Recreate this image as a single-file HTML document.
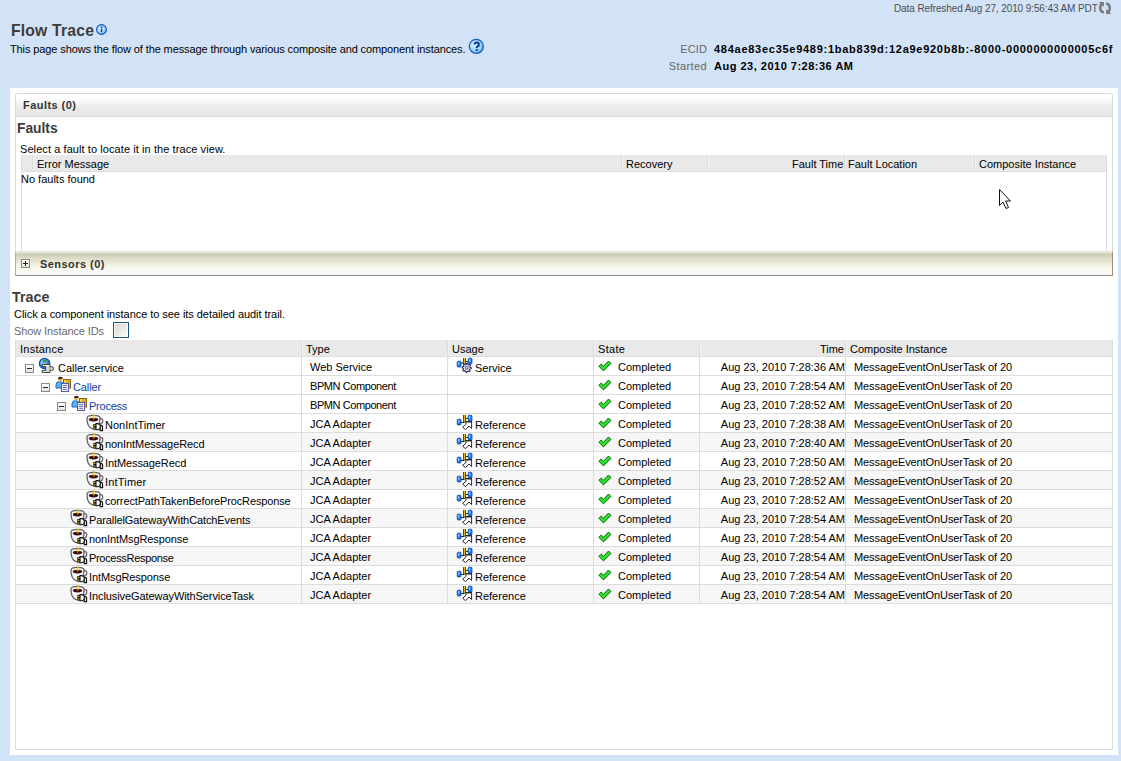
<!DOCTYPE html><html><head><meta charset="utf-8"><title>Flow Trace</title><style>
*{box-sizing:border-box}
html,body{margin:0;padding:0}
body{width:1121px;height:761px;overflow:hidden;background:#d3e3f7;font-family:"Liberation Sans",sans-serif;font-size:11px;color:#000;position:relative}
.a{position:absolute;white-space:nowrap}
.t11{font-size:11px;line-height:13px}
.b{font-weight:bold}
svg{display:block}
#panel{position:absolute;left:10px;top:88px;width:1108px;height:667px;background:#fff}
#fbox{position:absolute;left:15px;top:93px;width:1098px;height:183px;border:1px solid #dadada;border-bottom:none;border-top-left-radius:3px;border-top-right-radius:3px}
#fhead{position:absolute;left:16px;top:94px;width:1096px;height:23px;background:linear-gradient(#fff 0,#fdfdfd 5px,#f4f4f4 9px,#e9eae9 14px,#e7e8e7 100%);border-bottom:1px solid #d9d9d9;border-top-left-radius:2px;border-top-right-radius:2px}
#ftab{position:absolute;left:21px;top:155px;width:1086px;height:97px;border-left:1px solid #dcdcdc;border-right:1px solid #dcdcdc}
.th{position:absolute;top:0;height:17px;background:#e9e9e9;border-bottom:1px solid #dedede}
.hs{position:absolute;top:0;width:1px;height:16px;background:#dcdcdc}
.hs:after{content:"";position:absolute;left:1px;top:0;width:1px;height:16px;background:#f2f2f2}
#sens{position:absolute;left:15px;top:251px;width:1098px;height:25px;border-top:1px solid #e6e6de;border-left:1px solid #b0b0a8;border-right:1px solid #94948c;border-bottom:1px solid #8a8a82;background:linear-gradient(#efeee2 0px,#cbcab2 2px,#dcdbc6 6px,#efeedf 12px,#f8f8f0 17px,#f6f6f4 21px)}
#ttab{position:absolute;left:15px;top:340px;width:1098px;height:410px;border-left:1px solid #dcdcdc;border-right:1px solid #dcdcdc;border-bottom:1px solid #dcdcdc}
.row{position:absolute;left:1px;width:1096px;height:19px;border-bottom:1px solid #dcdcdc}
.cell{position:absolute;top:0;height:18px;white-space:nowrap;font-size:11px;line-height:13px}
.vl{position:absolute;width:1px;background:#dcdcdc}
.lnk{color:#0e3ca8}
</style></head><body>
<svg width="0" height="0" style="position:absolute"><defs>
<linearGradient id="gbox" x1="0" y1="0" x2="0" y2="1"><stop offset="0" stop-color="#fff"/><stop offset="1" stop-color="#e2e2d8"/></linearGradient>
<radialGradient id="globe" cx="0.35" cy="0.35" r="0.7"><stop offset="0" stop-color="#bfe6ff"/><stop offset="0.6" stop-color="#3a8ee0"/><stop offset="1" stop-color="#1a5ab0"/></radialGradient>
<radialGradient id="ibl" cx="0.4" cy="0.4" r="0.65"><stop offset="0" stop-color="#e6f6ff"/><stop offset="0.7" stop-color="#96d0fa"/><stop offset="1" stop-color="#4a9ae8"/></radialGradient>
</defs></svg>
<div class="a" style="left:894px;top:3px;font-size:10px;line-height:12px;color:#4d4d4d;letter-spacing:-0.1px">Data Refreshed Aug 27, 2010 9:56:43 AM PDT</div>
<div class="a" style="left:1097px;top:0px"><svg width="16" height="16" viewBox="0 0 16 16">
<path d="M5.8 3.2 Q3.2 4.2 3.2 8 Q3.2 11.6 6.8 12.6" fill="none" stroke="#787878" stroke-width="2.4"/>
<path d="M1.8 1.9 L6.9 1.9 L6.9 6.9 Z" fill="#787878"/>
<path d="M10.2 12.8 Q12.8 11.8 12.8 8 Q12.8 4.4 9.2 3.4" fill="none" stroke="#787878" stroke-width="2.4"/>
<path d="M14.3 13.9 L9.1 13.9 L9.1 9 Z" fill="#787878"/>
</svg></div>
<div class="a b" style="left:11px;top:22px;font-size:15.7px;line-height:18px;color:#3e3c3a;letter-spacing:0.2px">Flow Trace</div>
<div class="a" style="left:96px;top:24px"><svg width="11" height="11" viewBox="0 0 11 11"><circle cx="5.5" cy="5.5" r="4.9" fill="url(#ibl)" stroke="#0b55c0" stroke-width="1.1"/><circle cx="5.5" cy="3.2" r="0.85" fill="#0a3a9a"/><rect x="4.8" y="4.6" width="1.4" height="3.6" fill="#0a3a9a"/></svg></div>
<div class="a t11" style="left:10px;top:43px;letter-spacing:-0.11px">This page shows the flow of the message through various composite and component instances.</div>
<div class="a" style="left:468px;top:38px"><svg width="17" height="17" viewBox="0 0 17 17"><circle cx="8.3" cy="8.3" r="7" fill="url(#ibl)" stroke="#1a5ac8" stroke-width="1.3"/><path d="M8.6 15.6 a7.3 7.3 0 0 0 7 -5" stroke="#5a7aa0" stroke-width="1" fill="none" opacity="0.5"/>
<path d="M6.6 6.6 Q6.6 4.6 8.7 4.6 Q10.9 4.6 10.9 6.5 Q10.9 7.8 9.6 8.4 Q8.7 8.8 8.7 10.1" fill="none" stroke="#0a3a9a" stroke-width="2"/><rect x="7.7" y="11" width="2" height="1.8" fill="#0a3a9a"/></svg></div>
<div class="a t11" style="left:607px;width:100px;text-align:right;top:43px;color:#666;letter-spacing:0.1px">ECID</div>
<div class="a t11 b" style="left:714px;top:43px;letter-spacing:0.73px">484ae83ec35e9489:1bab839d:12a9e920b8b:-8000-0000000000005c6f</div>
<div class="a t11" style="left:607px;width:100px;text-align:right;top:60px;color:#666;letter-spacing:0.4px">Started</div>
<div class="a t11 b" style="left:714px;top:60px;letter-spacing:0.5px">Aug 23, 2010 7:28:36 AM</div>
<div id="panel"></div><div id="fbox"></div><div id="fhead"></div>
<div class="a t11 b" style="left:23px;top:99px;color:#333;letter-spacing:0.45px">Faults (0)</div>
<div class="a b" style="left:17px;top:121px;font-size:13.8px;line-height:15px;color:#3e3c3a">Faults</div>
<div class="a t11" style="left:20px;top:143px;letter-spacing:0.08px">Select a fault to locate it in the trace view.</div>
<div id="ftab"><div class="th" style="left:0;width:1084px"></div>
<div class="hs" style="left:10px"></div>
<div class="hs" style="left:599px"></div>
<div class="hs" style="left:685px"></div>
<div class="hs" style="left:822px"></div>
<div class="hs" style="left:952px"></div>
</div>
<div class="a t11" style="left:37px;top:158px">Error Message</div>
<div class="a t11" style="left:626px;top:158px">Recovery</div>
<div class="a t11" style="left:792px;top:158px;width:50px;text-align:right">Fault Time</div>
<div class="a t11" style="left:848px;top:158px">Fault Location</div>
<div class="a t11" style="left:979px;top:158px">Composite Instance</div>
<div class="a t11" style="left:21px;top:173px">No faults found</div>
<div class="a" style="left:998px;top:188px"><svg width="14" height="22" viewBox="0 0 14 22"><path d="M1.5 1.5 L1.5 17.5 L5 14 L8 20.5 L10.5 19.5 L7.6 13 L12.5 13 Z" fill="#fff" stroke="#111" stroke-width="1"/></svg></div>
<div id="sens"></div>
<div class="a" style="left:21px;top:259px"><svg width="9" height="9" viewBox="0 0 9 9"><rect x="0.5" y="0.5" width="8" height="8" fill="url(#gbox)" stroke="#8c8c84"/><rect x="2" y="4" width="5" height="1" fill="#222"/><rect x="4" y="2" width="1" height="5" fill="#222"/></svg></div>
<div class="a t11 b" style="left:40px;top:258px;color:#333;letter-spacing:0.45px">Sensors (0)</div>
<div class="a b" style="left:12px;top:290px;font-size:14.3px;line-height:15px;color:#3e3c3a">Trace</div>
<div class="a t11" style="left:14px;top:308px;letter-spacing:-0.05px">Click a component instance to see its detailed audit trail.</div>
<div class="a t11" style="left:14px;top:325px;color:#6a6a6a;letter-spacing:-0.1px">Show Instance IDs</div>
<div class="a" style="left:113px;top:322px;width:16px;height:16px;border:1px solid #1d5488;box-shadow:inset 0 0 0 1px #fdfcf8;background:linear-gradient(135deg,#d6d7d2,#fbfbf8)"></div>
<div id="ttab"></div>
<div class="a" style="left:16px;top:340px;width:1096px;height:17px;background:#e9e9e9;border-bottom:1px solid #dedede"></div>
<div class="a" style="left:301px;top:340px;width:1px;height:16px;background:#dcdcdc"></div><div class="a" style="left:302px;top:340px;width:1px;height:16px;background:#f2f2f2"></div>
<div class="a" style="left:447px;top:340px;width:1px;height:16px;background:#dcdcdc"></div><div class="a" style="left:448px;top:340px;width:1px;height:16px;background:#f2f2f2"></div>
<div class="a" style="left:593px;top:340px;width:1px;height:16px;background:#dcdcdc"></div><div class="a" style="left:594px;top:340px;width:1px;height:16px;background:#f2f2f2"></div>
<div class="a" style="left:699px;top:340px;width:1px;height:16px;background:#dcdcdc"></div><div class="a" style="left:700px;top:340px;width:1px;height:16px;background:#f2f2f2"></div>
<div class="a" style="left:845px;top:340px;width:1px;height:16px;background:#dcdcdc"></div><div class="a" style="left:846px;top:340px;width:1px;height:16px;background:#f2f2f2"></div>
<div class="a t11" style="left:20px;top:343px;letter-spacing:0.25px">Instance</div>
<div class="a t11" style="left:306px;top:343px">Type</div>
<div class="a t11" style="left:452px;top:343px">Usage</div>
<div class="a t11" style="left:598px;top:343px;letter-spacing:0.3px">State</div>
<div class="a t11" style="left:780px;top:343px;width:64px;text-align:right">Time</div>
<div class="a t11" style="left:850px;top:343px">Composite Instance</div>
<div class="a" style="left:16px;top:357px;width:1096px;height:19px;background:#fff;border-bottom:1px solid #dcdcdc"></div>
<div class="a" style="left:301px;top:357px;width:1px;height:18px;background:#dcdcdc"></div>
<div class="a" style="left:447px;top:357px;width:1px;height:18px;background:#dcdcdc"></div>
<div class="a" style="left:593px;top:357px;width:1px;height:18px;background:#dcdcdc"></div>
<div class="a" style="left:699px;top:357px;width:1px;height:18px;background:#dcdcdc"></div>
<div class="a" style="left:845px;top:357px;width:1px;height:18px;background:#dcdcdc"></div>
<div class="a" style="left:25px;top:364px"><svg width="9" height="9" viewBox="0 0 9 9"><rect x="0.5" y="0.5" width="8" height="8" fill="url(#gbox)" stroke="#8c8c84"/><rect x="2" y="4" width="5" height="1" fill="#222"/></svg></div>
<div class="a" style="left:36px;top:356px"><svg width="20" height="20" viewBox="0 0 20 20">
<circle cx="8.6" cy="7.5" r="5.2" fill="url(#globe)" stroke="#0a48a8" stroke-width="1.2"/>
<path d="M6.5 4 Q8.5 3 10.5 4.2 Q11 5.5 9.5 6.2 Q8 6 7.2 7 Q6 6 6.5 4Z" fill="#2a9a2a" opacity="0.85"/>
<path d="M11.8 6.5 Q13.3 7 13.2 9 L12 10 Q11.5 8 11.8 6.5Z" fill="#2a9a2a" opacity="0.85"/>
<circle cx="15.6" cy="12.6" r="2" fill="#cfcfcf" stroke="#474747" stroke-width="1"/><path d="M6.5 8.5 H14 V16.5 H6 V14.5 H9.5 V10.5 H6.5 Z" fill="#d4d4d4" stroke="#474747" stroke-width="1"/><rect x="13.4" y="11.3" width="1.3" height="2.6" fill="#d0d0d0"/>
<path d="M7.3 9.5 H13 M7 15.5 H9" stroke="#fff" stroke-width="0.8"/>
</svg></div>
<div class="a t11 " style="left:58px;top:362px;letter-spacing:-0.008px">Caller.service</div>
<div class="a t11" style="left:310px;top:361px;letter-spacing:0px">Web Service</div>
<div class="a" style="left:454px;top:357px"><svg width="20" height="18" viewBox="0 0 20 18">
<path d="M7 6 H9.5 M12 4.5 H14" stroke="#222" stroke-width="1"/>
<rect x="9.2" y="1" width="2.6" height="6" fill="#222"/><rect x="10.1" y="1" width="0.9" height="6" fill="#f6d21e"/>
<rect x="3.2" y="4.2" width="3.8" height="5.8" rx="1" fill="#1f78e8" stroke="#0848b8" stroke-width="0.8"/>
<rect x="4.3" y="5.2" width="1" height="2.5" fill="#cfe4ff"/>
<rect x="14.2" y="1.2" width="3.8" height="5.8" rx="1" fill="#1f78e8" stroke="#0848b8" stroke-width="0.8"/>
<rect x="15.3" y="2.2" width="1" height="2.5" fill="#cfe4ff"/>
<path d="M12.70 6.20 L13.60 6.29 L14.00 7.66 L14.59 7.97 L15.95 7.55 L16.52 8.24 L15.84 9.50 L16.03 10.14 L17.30 10.80 L17.21 11.70 L15.84 12.10 L15.53 12.69 L15.95 14.05 L15.26 14.62 L14.00 13.94 L13.36 14.13 L12.70 15.40 L11.80 15.31 L11.40 13.94 L10.81 13.63 L9.45 14.05 L8.88 13.36 L9.56 12.10 L9.37 11.46 L8.10 10.80 L8.19 9.90 L9.56 9.50 L9.87 8.91 L9.45 7.55 L10.14 6.98 L11.40 7.66 L12.04 7.47Z" fill="#ececf8" stroke="#2e2e66" stroke-width="1.1" stroke-linejoin="round"/>
<circle cx="12.7" cy="10.8" r="1.4" fill="#fff" stroke="#33336e" stroke-width="1"/>
</svg></div>
<div class="a t11" style="left:475px;top:362px">Service</div>
<div class="a" style="left:594px;top:356px"><svg width="20" height="18" viewBox="0 0 20 18">
<path d="M4.9 10.3 L7.2 8 L9.5 10.3 L14.5 5 L16.9 7.4 L9.5 14.9 Z" fill="#1edc1e" stroke="#0a6a0a" stroke-width="1"/>
<path d="M6.5 10 L9.5 12.8 M10.8 10.8 L15 6.6" stroke="#b4ffb4" stroke-width="0.7" stroke-dasharray="0.9 0.9"/>
</svg></div>
<div class="a t11" style="left:618px;top:361px">Completed</div>
<div class="a t11" style="left:701px;top:361px;width:144px;text-align:right">Aug 23, 2010 7:28:36 AM</div>
<div class="a t11" style="left:854px;top:361px;letter-spacing:-0.1px">MessageEventOnUserTask of 20</div>
<div class="a" style="left:16px;top:376px;width:1096px;height:19px;background:#fff;border-bottom:1px solid #dcdcdc"></div>
<div class="a" style="left:301px;top:376px;width:1px;height:18px;background:#dcdcdc"></div>
<div class="a" style="left:447px;top:376px;width:1px;height:18px;background:#dcdcdc"></div>
<div class="a" style="left:593px;top:376px;width:1px;height:18px;background:#dcdcdc"></div>
<div class="a" style="left:699px;top:376px;width:1px;height:18px;background:#dcdcdc"></div>
<div class="a" style="left:845px;top:376px;width:1px;height:18px;background:#dcdcdc"></div>
<div class="a" style="left:41px;top:383px"><svg width="9" height="9" viewBox="0 0 9 9"><rect x="0.5" y="0.5" width="8" height="8" fill="url(#gbox)" stroke="#8c8c84"/><rect x="2" y="4" width="5" height="1" fill="#222"/></svg></div>
<div class="a" style="left:52px;top:375px"><svg width="20" height="20" viewBox="0 0 20 20">
<rect x="11.5" y="4.5" width="7" height="8.5" fill="#dcae22" stroke="#8a6408" stroke-width="1"/>
<rect x="12.5" y="5" width="1.2" height="7.5" fill="#fbe890"/>
<path d="M4 13 V9.8 Q4 6.6 7.5 6.6 Q11.2 6.6 11.2 9.8 V13 Z" fill="#5cb2f2" stroke="#1a64c8" stroke-width="1"/>
<circle cx="8.3" cy="4.8" r="1.9" fill="#f2b01a"/>
<path d="M6 4.2 Q6 1.8 8.4 1.8 Q10.8 1.8 10.8 4 Q9 3.2 6 4.2Z" fill="#3a1408"/>
<rect x="9.5" y="8.5" width="7" height="8" fill="#f6f6ff" stroke="#5c5c9c" stroke-width="1.1"/>
<path d="M11 10.6 H15 M11 12.5 H15 M11 14.4 H15" stroke="#6c6cb4" stroke-width="1"/>
</svg></div>
<div class="a t11 lnk" style="left:73px;top:381px;letter-spacing:-0.120px">Caller</div>
<div class="a t11" style="left:310px;top:380px;letter-spacing:-0.42px">BPMN Component</div>
<div class="a" style="left:594px;top:375px"><svg width="20" height="18" viewBox="0 0 20 18">
<path d="M4.9 10.3 L7.2 8 L9.5 10.3 L14.5 5 L16.9 7.4 L9.5 14.9 Z" fill="#1edc1e" stroke="#0a6a0a" stroke-width="1"/>
<path d="M6.5 10 L9.5 12.8 M10.8 10.8 L15 6.6" stroke="#b4ffb4" stroke-width="0.7" stroke-dasharray="0.9 0.9"/>
</svg></div>
<div class="a t11" style="left:618px;top:380px">Completed</div>
<div class="a t11" style="left:701px;top:380px;width:144px;text-align:right">Aug 23, 2010 7:28:54 AM</div>
<div class="a t11" style="left:854px;top:380px;letter-spacing:-0.1px">MessageEventOnUserTask of 20</div>
<div class="a" style="left:16px;top:395px;width:1096px;height:19px;background:#fff;border-bottom:1px solid #dcdcdc"></div>
<div class="a" style="left:301px;top:395px;width:1px;height:18px;background:#dcdcdc"></div>
<div class="a" style="left:447px;top:395px;width:1px;height:18px;background:#dcdcdc"></div>
<div class="a" style="left:593px;top:395px;width:1px;height:18px;background:#dcdcdc"></div>
<div class="a" style="left:699px;top:395px;width:1px;height:18px;background:#dcdcdc"></div>
<div class="a" style="left:845px;top:395px;width:1px;height:18px;background:#dcdcdc"></div>
<div class="a" style="left:57px;top:402px"><svg width="9" height="9" viewBox="0 0 9 9"><rect x="0.5" y="0.5" width="8" height="8" fill="url(#gbox)" stroke="#8c8c84"/><rect x="2" y="4" width="5" height="1" fill="#222"/></svg></div>
<div class="a" style="left:68px;top:394px"><svg width="20" height="20" viewBox="0 0 20 20">
<rect x="11.5" y="4.5" width="7" height="8.5" fill="#dcae22" stroke="#8a6408" stroke-width="1"/>
<rect x="12.5" y="5" width="1.2" height="7.5" fill="#fbe890"/>
<path d="M4 13 V9.8 Q4 6.6 7.5 6.6 Q11.2 6.6 11.2 9.8 V13 Z" fill="#5cb2f2" stroke="#1a64c8" stroke-width="1"/>
<circle cx="8.3" cy="4.8" r="1.9" fill="#f2b01a"/>
<path d="M6 4.2 Q6 1.8 8.4 1.8 Q10.8 1.8 10.8 4 Q9 3.2 6 4.2Z" fill="#3a1408"/>
<rect x="9.5" y="8.5" width="7" height="8" fill="#f6f6ff" stroke="#5c5c9c" stroke-width="1.1"/>
<path d="M11 10.6 H15 M11 12.5 H15 M11 14.4 H15" stroke="#6c6cb4" stroke-width="1"/>
</svg></div>
<div class="a t11 lnk" style="left:89px;top:400px;letter-spacing:-0.233px">Process</div>
<div class="a t11" style="left:310px;top:399px;letter-spacing:-0.42px">BPMN Component</div>
<div class="a" style="left:594px;top:394px"><svg width="20" height="18" viewBox="0 0 20 18">
<path d="M4.9 10.3 L7.2 8 L9.5 10.3 L14.5 5 L16.9 7.4 L9.5 14.9 Z" fill="#1edc1e" stroke="#0a6a0a" stroke-width="1"/>
<path d="M6.5 10 L9.5 12.8 M10.8 10.8 L15 6.6" stroke="#b4ffb4" stroke-width="0.7" stroke-dasharray="0.9 0.9"/>
</svg></div>
<div class="a t11" style="left:618px;top:399px">Completed</div>
<div class="a t11" style="left:701px;top:399px;width:144px;text-align:right">Aug 23, 2010 7:28:52 AM</div>
<div class="a t11" style="left:854px;top:399px;letter-spacing:-0.1px">MessageEventOnUserTask of 20</div>
<div class="a" style="left:16px;top:414px;width:1096px;height:19px;background:#fff;border-bottom:1px solid #dcdcdc"></div>
<div class="a" style="left:301px;top:414px;width:1px;height:18px;background:#dcdcdc"></div>
<div class="a" style="left:447px;top:414px;width:1px;height:18px;background:#dcdcdc"></div>
<div class="a" style="left:593px;top:414px;width:1px;height:18px;background:#dcdcdc"></div>
<div class="a" style="left:699px;top:414px;width:1px;height:18px;background:#dcdcdc"></div>
<div class="a" style="left:845px;top:414px;width:1px;height:18px;background:#dcdcdc"></div>
<div class="a" style="left:85px;top:413px"><svg width="20" height="20" viewBox="0 0 20 20">
<path d="M14.3 5.6 Q18.2 5 17.7 8.6 Q17.2 11.4 14 11.2" fill="none" stroke="#6a6a6a" stroke-width="1.3"/>
<path d="M2 5 Q2 2.4 8.5 2.4 Q15 2.4 15 5 Q15 12 12 14.5 Q10.5 15.8 8.5 15.8 Q6.5 15.8 5 14.5 Q2 12 2 5 Z" fill="#f4f4f8" stroke="#626262" stroke-width="1.3"/>
<ellipse cx="8.5" cy="6.6" rx="4.7" ry="1.8" fill="#3c0604"/>
<path d="M9 1.6 L7 5.2 L8.8 5.2 L8 7.8 L10.6 4.2 L8.9 4.2 L10.2 1.6 Z" fill="#f8cc22"/>
<path d="M15 12.6 H16.4 Q17.6 12.6 17.6 14 V17.6 H15.2 Z" fill="#dcdcdc" stroke="#111" stroke-width="1.1"/>
<rect x="8.3" y="11" width="3" height="5.6" fill="#111"/>
<rect x="8.9" y="11.8" width="1.9" height="1.1" fill="#f4d020"/><rect x="8.9" y="14.5" width="1.9" height="1.1" fill="#f4d020"/>
<path d="M11 10.6 H12.4 Q15.4 10.6 15.4 13.6 Q15.4 16.7 12.4 16.7 H11 Z" fill="#fafafa" stroke="#111" stroke-width="1.1"/>
</svg></div>
<div class="a t11 " style="left:105px;top:419px;letter-spacing:0.010px">NonIntTimer</div>
<div class="a t11" style="left:310px;top:418px;letter-spacing:0px">JCA Adapter</div>
<div class="a" style="left:454px;top:414px"><svg width="20" height="18" viewBox="0 0 20 18">
<path d="M7 8.5 H10 M12 4.5 H14 M11 7.5 H18" stroke="#222" stroke-width="1"/>
<rect x="9.2" y="1" width="2.6" height="7" fill="#222"/><rect x="10.1" y="1" width="0.9" height="7" fill="#f6d21e"/>
<rect x="3.2" y="5.2" width="3.8" height="5.8" rx="1" fill="#1f78e8" stroke="#0848b8" stroke-width="0.8"/>
<rect x="4.3" y="6.2" width="1" height="2.5" fill="#cfe4ff"/>
<rect x="14.2" y="1.2" width="3.8" height="5.8" rx="1" fill="#1f78e8" stroke="#0848b8" stroke-width="0.8"/>
<rect x="15.3" y="2.2" width="1" height="2.5" fill="#cfe4ff"/>
<path d="M11 8 H17.6 V14.5 L15 12 L11.6 15.6 L8.6 13.3 L12.4 10 L10.6 8.2 Z" fill="#fff" stroke="#2a2a2a" stroke-width="1"/>
</svg></div>
<div class="a t11" style="left:475px;top:419px">Reference</div>
<div class="a" style="left:594px;top:413px"><svg width="20" height="18" viewBox="0 0 20 18">
<path d="M4.9 10.3 L7.2 8 L9.5 10.3 L14.5 5 L16.9 7.4 L9.5 14.9 Z" fill="#1edc1e" stroke="#0a6a0a" stroke-width="1"/>
<path d="M6.5 10 L9.5 12.8 M10.8 10.8 L15 6.6" stroke="#b4ffb4" stroke-width="0.7" stroke-dasharray="0.9 0.9"/>
</svg></div>
<div class="a t11" style="left:618px;top:418px">Completed</div>
<div class="a t11" style="left:701px;top:418px;width:144px;text-align:right">Aug 23, 2010 7:28:38 AM</div>
<div class="a t11" style="left:854px;top:418px;letter-spacing:-0.1px">MessageEventOnUserTask of 20</div>
<div class="a" style="left:16px;top:433px;width:1096px;height:19px;background:#f6f6f6;border-bottom:1px solid #dcdcdc"></div>
<div class="a" style="left:301px;top:433px;width:1px;height:18px;background:#dcdcdc"></div>
<div class="a" style="left:447px;top:433px;width:1px;height:18px;background:#dcdcdc"></div>
<div class="a" style="left:593px;top:433px;width:1px;height:18px;background:#dcdcdc"></div>
<div class="a" style="left:699px;top:433px;width:1px;height:18px;background:#dcdcdc"></div>
<div class="a" style="left:845px;top:433px;width:1px;height:18px;background:#dcdcdc"></div>
<div class="a" style="left:85px;top:432px"><svg width="20" height="20" viewBox="0 0 20 20">
<path d="M14.3 5.6 Q18.2 5 17.7 8.6 Q17.2 11.4 14 11.2" fill="none" stroke="#6a6a6a" stroke-width="1.3"/>
<path d="M2 5 Q2 2.4 8.5 2.4 Q15 2.4 15 5 Q15 12 12 14.5 Q10.5 15.8 8.5 15.8 Q6.5 15.8 5 14.5 Q2 12 2 5 Z" fill="#f4f4f8" stroke="#626262" stroke-width="1.3"/>
<ellipse cx="8.5" cy="6.6" rx="4.7" ry="1.8" fill="#3c0604"/>
<path d="M9 1.6 L7 5.2 L8.8 5.2 L8 7.8 L10.6 4.2 L8.9 4.2 L10.2 1.6 Z" fill="#f8cc22"/>
<path d="M15 12.6 H16.4 Q17.6 12.6 17.6 14 V17.6 H15.2 Z" fill="#dcdcdc" stroke="#111" stroke-width="1.1"/>
<rect x="8.3" y="11" width="3" height="5.6" fill="#111"/>
<rect x="8.9" y="11.8" width="1.9" height="1.1" fill="#f4d020"/><rect x="8.9" y="14.5" width="1.9" height="1.1" fill="#f4d020"/>
<path d="M11 10.6 H12.4 Q15.4 10.6 15.4 13.6 Q15.4 16.7 12.4 16.7 H11 Z" fill="#fafafa" stroke="#111" stroke-width="1.1"/>
</svg></div>
<div class="a t11 " style="left:105px;top:438px;letter-spacing:-0.081px">nonIntMessageRecd</div>
<div class="a t11" style="left:310px;top:437px;letter-spacing:0px">JCA Adapter</div>
<div class="a" style="left:454px;top:433px"><svg width="20" height="18" viewBox="0 0 20 18">
<path d="M7 8.5 H10 M12 4.5 H14 M11 7.5 H18" stroke="#222" stroke-width="1"/>
<rect x="9.2" y="1" width="2.6" height="7" fill="#222"/><rect x="10.1" y="1" width="0.9" height="7" fill="#f6d21e"/>
<rect x="3.2" y="5.2" width="3.8" height="5.8" rx="1" fill="#1f78e8" stroke="#0848b8" stroke-width="0.8"/>
<rect x="4.3" y="6.2" width="1" height="2.5" fill="#cfe4ff"/>
<rect x="14.2" y="1.2" width="3.8" height="5.8" rx="1" fill="#1f78e8" stroke="#0848b8" stroke-width="0.8"/>
<rect x="15.3" y="2.2" width="1" height="2.5" fill="#cfe4ff"/>
<path d="M11 8 H17.6 V14.5 L15 12 L11.6 15.6 L8.6 13.3 L12.4 10 L10.6 8.2 Z" fill="#fff" stroke="#2a2a2a" stroke-width="1"/>
</svg></div>
<div class="a t11" style="left:475px;top:438px">Reference</div>
<div class="a" style="left:594px;top:432px"><svg width="20" height="18" viewBox="0 0 20 18">
<path d="M4.9 10.3 L7.2 8 L9.5 10.3 L14.5 5 L16.9 7.4 L9.5 14.9 Z" fill="#1edc1e" stroke="#0a6a0a" stroke-width="1"/>
<path d="M6.5 10 L9.5 12.8 M10.8 10.8 L15 6.6" stroke="#b4ffb4" stroke-width="0.7" stroke-dasharray="0.9 0.9"/>
</svg></div>
<div class="a t11" style="left:618px;top:437px">Completed</div>
<div class="a t11" style="left:701px;top:437px;width:144px;text-align:right">Aug 23, 2010 7:28:40 AM</div>
<div class="a t11" style="left:854px;top:437px;letter-spacing:-0.1px">MessageEventOnUserTask of 20</div>
<div class="a" style="left:16px;top:452px;width:1096px;height:19px;background:#fff;border-bottom:1px solid #dcdcdc"></div>
<div class="a" style="left:301px;top:452px;width:1px;height:18px;background:#dcdcdc"></div>
<div class="a" style="left:447px;top:452px;width:1px;height:18px;background:#dcdcdc"></div>
<div class="a" style="left:593px;top:452px;width:1px;height:18px;background:#dcdcdc"></div>
<div class="a" style="left:699px;top:452px;width:1px;height:18px;background:#dcdcdc"></div>
<div class="a" style="left:845px;top:452px;width:1px;height:18px;background:#dcdcdc"></div>
<div class="a" style="left:85px;top:451px"><svg width="20" height="20" viewBox="0 0 20 20">
<path d="M14.3 5.6 Q18.2 5 17.7 8.6 Q17.2 11.4 14 11.2" fill="none" stroke="#6a6a6a" stroke-width="1.3"/>
<path d="M2 5 Q2 2.4 8.5 2.4 Q15 2.4 15 5 Q15 12 12 14.5 Q10.5 15.8 8.5 15.8 Q6.5 15.8 5 14.5 Q2 12 2 5 Z" fill="#f4f4f8" stroke="#626262" stroke-width="1.3"/>
<ellipse cx="8.5" cy="6.6" rx="4.7" ry="1.8" fill="#3c0604"/>
<path d="M9 1.6 L7 5.2 L8.8 5.2 L8 7.8 L10.6 4.2 L8.9 4.2 L10.2 1.6 Z" fill="#f8cc22"/>
<path d="M15 12.6 H16.4 Q17.6 12.6 17.6 14 V17.6 H15.2 Z" fill="#dcdcdc" stroke="#111" stroke-width="1.1"/>
<rect x="8.3" y="11" width="3" height="5.6" fill="#111"/>
<rect x="8.9" y="11.8" width="1.9" height="1.1" fill="#f4d020"/><rect x="8.9" y="14.5" width="1.9" height="1.1" fill="#f4d020"/>
<path d="M11 10.6 H12.4 Q15.4 10.6 15.4 13.6 Q15.4 16.7 12.4 16.7 H11 Z" fill="#fafafa" stroke="#111" stroke-width="1.1"/>
</svg></div>
<div class="a t11 " style="left:105px;top:457px;letter-spacing:-0.100px">IntMessageRecd</div>
<div class="a t11" style="left:310px;top:456px;letter-spacing:0px">JCA Adapter</div>
<div class="a" style="left:454px;top:452px"><svg width="20" height="18" viewBox="0 0 20 18">
<path d="M7 8.5 H10 M12 4.5 H14 M11 7.5 H18" stroke="#222" stroke-width="1"/>
<rect x="9.2" y="1" width="2.6" height="7" fill="#222"/><rect x="10.1" y="1" width="0.9" height="7" fill="#f6d21e"/>
<rect x="3.2" y="5.2" width="3.8" height="5.8" rx="1" fill="#1f78e8" stroke="#0848b8" stroke-width="0.8"/>
<rect x="4.3" y="6.2" width="1" height="2.5" fill="#cfe4ff"/>
<rect x="14.2" y="1.2" width="3.8" height="5.8" rx="1" fill="#1f78e8" stroke="#0848b8" stroke-width="0.8"/>
<rect x="15.3" y="2.2" width="1" height="2.5" fill="#cfe4ff"/>
<path d="M11 8 H17.6 V14.5 L15 12 L11.6 15.6 L8.6 13.3 L12.4 10 L10.6 8.2 Z" fill="#fff" stroke="#2a2a2a" stroke-width="1"/>
</svg></div>
<div class="a t11" style="left:475px;top:457px">Reference</div>
<div class="a" style="left:594px;top:451px"><svg width="20" height="18" viewBox="0 0 20 18">
<path d="M4.9 10.3 L7.2 8 L9.5 10.3 L14.5 5 L16.9 7.4 L9.5 14.9 Z" fill="#1edc1e" stroke="#0a6a0a" stroke-width="1"/>
<path d="M6.5 10 L9.5 12.8 M10.8 10.8 L15 6.6" stroke="#b4ffb4" stroke-width="0.7" stroke-dasharray="0.9 0.9"/>
</svg></div>
<div class="a t11" style="left:618px;top:456px">Completed</div>
<div class="a t11" style="left:701px;top:456px;width:144px;text-align:right">Aug 23, 2010 7:28:50 AM</div>
<div class="a t11" style="left:854px;top:456px;letter-spacing:-0.1px">MessageEventOnUserTask of 20</div>
<div class="a" style="left:16px;top:471px;width:1096px;height:19px;background:#f6f6f6;border-bottom:1px solid #dcdcdc"></div>
<div class="a" style="left:301px;top:471px;width:1px;height:18px;background:#dcdcdc"></div>
<div class="a" style="left:447px;top:471px;width:1px;height:18px;background:#dcdcdc"></div>
<div class="a" style="left:593px;top:471px;width:1px;height:18px;background:#dcdcdc"></div>
<div class="a" style="left:699px;top:471px;width:1px;height:18px;background:#dcdcdc"></div>
<div class="a" style="left:845px;top:471px;width:1px;height:18px;background:#dcdcdc"></div>
<div class="a" style="left:85px;top:470px"><svg width="20" height="20" viewBox="0 0 20 20">
<path d="M14.3 5.6 Q18.2 5 17.7 8.6 Q17.2 11.4 14 11.2" fill="none" stroke="#6a6a6a" stroke-width="1.3"/>
<path d="M2 5 Q2 2.4 8.5 2.4 Q15 2.4 15 5 Q15 12 12 14.5 Q10.5 15.8 8.5 15.8 Q6.5 15.8 5 14.5 Q2 12 2 5 Z" fill="#f4f4f8" stroke="#626262" stroke-width="1.3"/>
<ellipse cx="8.5" cy="6.6" rx="4.7" ry="1.8" fill="#3c0604"/>
<path d="M9 1.6 L7 5.2 L8.8 5.2 L8 7.8 L10.6 4.2 L8.9 4.2 L10.2 1.6 Z" fill="#f8cc22"/>
<path d="M15 12.6 H16.4 Q17.6 12.6 17.6 14 V17.6 H15.2 Z" fill="#dcdcdc" stroke="#111" stroke-width="1.1"/>
<rect x="8.3" y="11" width="3" height="5.6" fill="#111"/>
<rect x="8.9" y="11.8" width="1.9" height="1.1" fill="#f4d020"/><rect x="8.9" y="14.5" width="1.9" height="1.1" fill="#f4d020"/>
<path d="M11 10.6 H12.4 Q15.4 10.6 15.4 13.6 Q15.4 16.7 12.4 16.7 H11 Z" fill="#fafafa" stroke="#111" stroke-width="1.1"/>
</svg></div>
<div class="a t11 " style="left:105px;top:476px;letter-spacing:0.186px">IntTimer</div>
<div class="a t11" style="left:310px;top:475px;letter-spacing:0px">JCA Adapter</div>
<div class="a" style="left:454px;top:471px"><svg width="20" height="18" viewBox="0 0 20 18">
<path d="M7 8.5 H10 M12 4.5 H14 M11 7.5 H18" stroke="#222" stroke-width="1"/>
<rect x="9.2" y="1" width="2.6" height="7" fill="#222"/><rect x="10.1" y="1" width="0.9" height="7" fill="#f6d21e"/>
<rect x="3.2" y="5.2" width="3.8" height="5.8" rx="1" fill="#1f78e8" stroke="#0848b8" stroke-width="0.8"/>
<rect x="4.3" y="6.2" width="1" height="2.5" fill="#cfe4ff"/>
<rect x="14.2" y="1.2" width="3.8" height="5.8" rx="1" fill="#1f78e8" stroke="#0848b8" stroke-width="0.8"/>
<rect x="15.3" y="2.2" width="1" height="2.5" fill="#cfe4ff"/>
<path d="M11 8 H17.6 V14.5 L15 12 L11.6 15.6 L8.6 13.3 L12.4 10 L10.6 8.2 Z" fill="#fff" stroke="#2a2a2a" stroke-width="1"/>
</svg></div>
<div class="a t11" style="left:475px;top:476px">Reference</div>
<div class="a" style="left:594px;top:470px"><svg width="20" height="18" viewBox="0 0 20 18">
<path d="M4.9 10.3 L7.2 8 L9.5 10.3 L14.5 5 L16.9 7.4 L9.5 14.9 Z" fill="#1edc1e" stroke="#0a6a0a" stroke-width="1"/>
<path d="M6.5 10 L9.5 12.8 M10.8 10.8 L15 6.6" stroke="#b4ffb4" stroke-width="0.7" stroke-dasharray="0.9 0.9"/>
</svg></div>
<div class="a t11" style="left:618px;top:475px">Completed</div>
<div class="a t11" style="left:701px;top:475px;width:144px;text-align:right">Aug 23, 2010 7:28:52 AM</div>
<div class="a t11" style="left:854px;top:475px;letter-spacing:-0.1px">MessageEventOnUserTask of 20</div>
<div class="a" style="left:16px;top:490px;width:1096px;height:19px;background:#fff;border-bottom:1px solid #dcdcdc"></div>
<div class="a" style="left:301px;top:490px;width:1px;height:18px;background:#dcdcdc"></div>
<div class="a" style="left:447px;top:490px;width:1px;height:18px;background:#dcdcdc"></div>
<div class="a" style="left:593px;top:490px;width:1px;height:18px;background:#dcdcdc"></div>
<div class="a" style="left:699px;top:490px;width:1px;height:18px;background:#dcdcdc"></div>
<div class="a" style="left:845px;top:490px;width:1px;height:18px;background:#dcdcdc"></div>
<div class="a" style="left:85px;top:489px"><svg width="20" height="20" viewBox="0 0 20 20">
<path d="M14.3 5.6 Q18.2 5 17.7 8.6 Q17.2 11.4 14 11.2" fill="none" stroke="#6a6a6a" stroke-width="1.3"/>
<path d="M2 5 Q2 2.4 8.5 2.4 Q15 2.4 15 5 Q15 12 12 14.5 Q10.5 15.8 8.5 15.8 Q6.5 15.8 5 14.5 Q2 12 2 5 Z" fill="#f4f4f8" stroke="#626262" stroke-width="1.3"/>
<ellipse cx="8.5" cy="6.6" rx="4.7" ry="1.8" fill="#3c0604"/>
<path d="M9 1.6 L7 5.2 L8.8 5.2 L8 7.8 L10.6 4.2 L8.9 4.2 L10.2 1.6 Z" fill="#f8cc22"/>
<path d="M15 12.6 H16.4 Q17.6 12.6 17.6 14 V17.6 H15.2 Z" fill="#dcdcdc" stroke="#111" stroke-width="1.1"/>
<rect x="8.3" y="11" width="3" height="5.6" fill="#111"/>
<rect x="8.9" y="11.8" width="1.9" height="1.1" fill="#f4d020"/><rect x="8.9" y="14.5" width="1.9" height="1.1" fill="#f4d020"/>
<path d="M11 10.6 H12.4 Q15.4 10.6 15.4 13.6 Q15.4 16.7 12.4 16.7 H11 Z" fill="#fafafa" stroke="#111" stroke-width="1.1"/>
</svg></div>
<div class="a t11 " style="left:105px;top:495px;letter-spacing:-0.136px">correctPathTakenBeforeProcResponse</div>
<div class="a t11" style="left:310px;top:494px;letter-spacing:0px">JCA Adapter</div>
<div class="a" style="left:454px;top:490px"><svg width="20" height="18" viewBox="0 0 20 18">
<path d="M7 8.5 H10 M12 4.5 H14 M11 7.5 H18" stroke="#222" stroke-width="1"/>
<rect x="9.2" y="1" width="2.6" height="7" fill="#222"/><rect x="10.1" y="1" width="0.9" height="7" fill="#f6d21e"/>
<rect x="3.2" y="5.2" width="3.8" height="5.8" rx="1" fill="#1f78e8" stroke="#0848b8" stroke-width="0.8"/>
<rect x="4.3" y="6.2" width="1" height="2.5" fill="#cfe4ff"/>
<rect x="14.2" y="1.2" width="3.8" height="5.8" rx="1" fill="#1f78e8" stroke="#0848b8" stroke-width="0.8"/>
<rect x="15.3" y="2.2" width="1" height="2.5" fill="#cfe4ff"/>
<path d="M11 8 H17.6 V14.5 L15 12 L11.6 15.6 L8.6 13.3 L12.4 10 L10.6 8.2 Z" fill="#fff" stroke="#2a2a2a" stroke-width="1"/>
</svg></div>
<div class="a t11" style="left:475px;top:495px">Reference</div>
<div class="a" style="left:594px;top:489px"><svg width="20" height="18" viewBox="0 0 20 18">
<path d="M4.9 10.3 L7.2 8 L9.5 10.3 L14.5 5 L16.9 7.4 L9.5 14.9 Z" fill="#1edc1e" stroke="#0a6a0a" stroke-width="1"/>
<path d="M6.5 10 L9.5 12.8 M10.8 10.8 L15 6.6" stroke="#b4ffb4" stroke-width="0.7" stroke-dasharray="0.9 0.9"/>
</svg></div>
<div class="a t11" style="left:618px;top:494px">Completed</div>
<div class="a t11" style="left:701px;top:494px;width:144px;text-align:right">Aug 23, 2010 7:28:52 AM</div>
<div class="a t11" style="left:854px;top:494px;letter-spacing:-0.1px">MessageEventOnUserTask of 20</div>
<div class="a" style="left:16px;top:509px;width:1096px;height:19px;background:#f6f6f6;border-bottom:1px solid #dcdcdc"></div>
<div class="a" style="left:301px;top:509px;width:1px;height:18px;background:#dcdcdc"></div>
<div class="a" style="left:447px;top:509px;width:1px;height:18px;background:#dcdcdc"></div>
<div class="a" style="left:593px;top:509px;width:1px;height:18px;background:#dcdcdc"></div>
<div class="a" style="left:699px;top:509px;width:1px;height:18px;background:#dcdcdc"></div>
<div class="a" style="left:845px;top:509px;width:1px;height:18px;background:#dcdcdc"></div>
<div class="a" style="left:69px;top:508px"><svg width="20" height="20" viewBox="0 0 20 20">
<path d="M14.3 5.6 Q18.2 5 17.7 8.6 Q17.2 11.4 14 11.2" fill="none" stroke="#6a6a6a" stroke-width="1.3"/>
<path d="M2 5 Q2 2.4 8.5 2.4 Q15 2.4 15 5 Q15 12 12 14.5 Q10.5 15.8 8.5 15.8 Q6.5 15.8 5 14.5 Q2 12 2 5 Z" fill="#f4f4f8" stroke="#626262" stroke-width="1.3"/>
<ellipse cx="8.5" cy="6.6" rx="4.7" ry="1.8" fill="#3c0604"/>
<path d="M9 1.6 L7 5.2 L8.8 5.2 L8 7.8 L10.6 4.2 L8.9 4.2 L10.2 1.6 Z" fill="#f8cc22"/>
<path d="M15 12.6 H16.4 Q17.6 12.6 17.6 14 V17.6 H15.2 Z" fill="#dcdcdc" stroke="#111" stroke-width="1.1"/>
<rect x="8.3" y="11" width="3" height="5.6" fill="#111"/>
<rect x="8.9" y="11.8" width="1.9" height="1.1" fill="#f4d020"/><rect x="8.9" y="14.5" width="1.9" height="1.1" fill="#f4d020"/>
<path d="M11 10.6 H12.4 Q15.4 10.6 15.4 13.6 Q15.4 16.7 12.4 16.7 H11 Z" fill="#fafafa" stroke="#111" stroke-width="1.1"/>
</svg></div>
<div class="a t11 " style="left:89px;top:514px;letter-spacing:-0.103px">ParallelGatewayWithCatchEvents</div>
<div class="a t11" style="left:310px;top:513px;letter-spacing:0px">JCA Adapter</div>
<div class="a" style="left:454px;top:509px"><svg width="20" height="18" viewBox="0 0 20 18">
<path d="M7 8.5 H10 M12 4.5 H14 M11 7.5 H18" stroke="#222" stroke-width="1"/>
<rect x="9.2" y="1" width="2.6" height="7" fill="#222"/><rect x="10.1" y="1" width="0.9" height="7" fill="#f6d21e"/>
<rect x="3.2" y="5.2" width="3.8" height="5.8" rx="1" fill="#1f78e8" stroke="#0848b8" stroke-width="0.8"/>
<rect x="4.3" y="6.2" width="1" height="2.5" fill="#cfe4ff"/>
<rect x="14.2" y="1.2" width="3.8" height="5.8" rx="1" fill="#1f78e8" stroke="#0848b8" stroke-width="0.8"/>
<rect x="15.3" y="2.2" width="1" height="2.5" fill="#cfe4ff"/>
<path d="M11 8 H17.6 V14.5 L15 12 L11.6 15.6 L8.6 13.3 L12.4 10 L10.6 8.2 Z" fill="#fff" stroke="#2a2a2a" stroke-width="1"/>
</svg></div>
<div class="a t11" style="left:475px;top:514px">Reference</div>
<div class="a" style="left:594px;top:508px"><svg width="20" height="18" viewBox="0 0 20 18">
<path d="M4.9 10.3 L7.2 8 L9.5 10.3 L14.5 5 L16.9 7.4 L9.5 14.9 Z" fill="#1edc1e" stroke="#0a6a0a" stroke-width="1"/>
<path d="M6.5 10 L9.5 12.8 M10.8 10.8 L15 6.6" stroke="#b4ffb4" stroke-width="0.7" stroke-dasharray="0.9 0.9"/>
</svg></div>
<div class="a t11" style="left:618px;top:513px">Completed</div>
<div class="a t11" style="left:701px;top:513px;width:144px;text-align:right">Aug 23, 2010 7:28:54 AM</div>
<div class="a t11" style="left:854px;top:513px;letter-spacing:-0.1px">MessageEventOnUserTask of 20</div>
<div class="a" style="left:16px;top:528px;width:1096px;height:19px;background:#fff;border-bottom:1px solid #dcdcdc"></div>
<div class="a" style="left:301px;top:528px;width:1px;height:18px;background:#dcdcdc"></div>
<div class="a" style="left:447px;top:528px;width:1px;height:18px;background:#dcdcdc"></div>
<div class="a" style="left:593px;top:528px;width:1px;height:18px;background:#dcdcdc"></div>
<div class="a" style="left:699px;top:528px;width:1px;height:18px;background:#dcdcdc"></div>
<div class="a" style="left:845px;top:528px;width:1px;height:18px;background:#dcdcdc"></div>
<div class="a" style="left:69px;top:527px"><svg width="20" height="20" viewBox="0 0 20 20">
<path d="M14.3 5.6 Q18.2 5 17.7 8.6 Q17.2 11.4 14 11.2" fill="none" stroke="#6a6a6a" stroke-width="1.3"/>
<path d="M2 5 Q2 2.4 8.5 2.4 Q15 2.4 15 5 Q15 12 12 14.5 Q10.5 15.8 8.5 15.8 Q6.5 15.8 5 14.5 Q2 12 2 5 Z" fill="#f4f4f8" stroke="#626262" stroke-width="1.3"/>
<ellipse cx="8.5" cy="6.6" rx="4.7" ry="1.8" fill="#3c0604"/>
<path d="M9 1.6 L7 5.2 L8.8 5.2 L8 7.8 L10.6 4.2 L8.9 4.2 L10.2 1.6 Z" fill="#f8cc22"/>
<path d="M15 12.6 H16.4 Q17.6 12.6 17.6 14 V17.6 H15.2 Z" fill="#dcdcdc" stroke="#111" stroke-width="1.1"/>
<rect x="8.3" y="11" width="3" height="5.6" fill="#111"/>
<rect x="8.9" y="11.8" width="1.9" height="1.1" fill="#f4d020"/><rect x="8.9" y="14.5" width="1.9" height="1.1" fill="#f4d020"/>
<path d="M11 10.6 H12.4 Q15.4 10.6 15.4 13.6 Q15.4 16.7 12.4 16.7 H11 Z" fill="#fafafa" stroke="#111" stroke-width="1.1"/>
</svg></div>
<div class="a t11 " style="left:89px;top:533px;letter-spacing:-0.100px">nonIntMsgResponse</div>
<div class="a t11" style="left:310px;top:532px;letter-spacing:0px">JCA Adapter</div>
<div class="a" style="left:454px;top:528px"><svg width="20" height="18" viewBox="0 0 20 18">
<path d="M7 8.5 H10 M12 4.5 H14 M11 7.5 H18" stroke="#222" stroke-width="1"/>
<rect x="9.2" y="1" width="2.6" height="7" fill="#222"/><rect x="10.1" y="1" width="0.9" height="7" fill="#f6d21e"/>
<rect x="3.2" y="5.2" width="3.8" height="5.8" rx="1" fill="#1f78e8" stroke="#0848b8" stroke-width="0.8"/>
<rect x="4.3" y="6.2" width="1" height="2.5" fill="#cfe4ff"/>
<rect x="14.2" y="1.2" width="3.8" height="5.8" rx="1" fill="#1f78e8" stroke="#0848b8" stroke-width="0.8"/>
<rect x="15.3" y="2.2" width="1" height="2.5" fill="#cfe4ff"/>
<path d="M11 8 H17.6 V14.5 L15 12 L11.6 15.6 L8.6 13.3 L12.4 10 L10.6 8.2 Z" fill="#fff" stroke="#2a2a2a" stroke-width="1"/>
</svg></div>
<div class="a t11" style="left:475px;top:533px">Reference</div>
<div class="a" style="left:594px;top:527px"><svg width="20" height="18" viewBox="0 0 20 18">
<path d="M4.9 10.3 L7.2 8 L9.5 10.3 L14.5 5 L16.9 7.4 L9.5 14.9 Z" fill="#1edc1e" stroke="#0a6a0a" stroke-width="1"/>
<path d="M6.5 10 L9.5 12.8 M10.8 10.8 L15 6.6" stroke="#b4ffb4" stroke-width="0.7" stroke-dasharray="0.9 0.9"/>
</svg></div>
<div class="a t11" style="left:618px;top:532px">Completed</div>
<div class="a t11" style="left:701px;top:532px;width:144px;text-align:right">Aug 23, 2010 7:28:54 AM</div>
<div class="a t11" style="left:854px;top:532px;letter-spacing:-0.1px">MessageEventOnUserTask of 20</div>
<div class="a" style="left:16px;top:547px;width:1096px;height:19px;background:#f6f6f6;border-bottom:1px solid #dcdcdc"></div>
<div class="a" style="left:301px;top:547px;width:1px;height:18px;background:#dcdcdc"></div>
<div class="a" style="left:447px;top:547px;width:1px;height:18px;background:#dcdcdc"></div>
<div class="a" style="left:593px;top:547px;width:1px;height:18px;background:#dcdcdc"></div>
<div class="a" style="left:699px;top:547px;width:1px;height:18px;background:#dcdcdc"></div>
<div class="a" style="left:845px;top:547px;width:1px;height:18px;background:#dcdcdc"></div>
<div class="a" style="left:69px;top:546px"><svg width="20" height="20" viewBox="0 0 20 20">
<path d="M14.3 5.6 Q18.2 5 17.7 8.6 Q17.2 11.4 14 11.2" fill="none" stroke="#6a6a6a" stroke-width="1.3"/>
<path d="M2 5 Q2 2.4 8.5 2.4 Q15 2.4 15 5 Q15 12 12 14.5 Q10.5 15.8 8.5 15.8 Q6.5 15.8 5 14.5 Q2 12 2 5 Z" fill="#f4f4f8" stroke="#626262" stroke-width="1.3"/>
<ellipse cx="8.5" cy="6.6" rx="4.7" ry="1.8" fill="#3c0604"/>
<path d="M9 1.6 L7 5.2 L8.8 5.2 L8 7.8 L10.6 4.2 L8.9 4.2 L10.2 1.6 Z" fill="#f8cc22"/>
<path d="M15 12.6 H16.4 Q17.6 12.6 17.6 14 V17.6 H15.2 Z" fill="#dcdcdc" stroke="#111" stroke-width="1.1"/>
<rect x="8.3" y="11" width="3" height="5.6" fill="#111"/>
<rect x="8.9" y="11.8" width="1.9" height="1.1" fill="#f4d020"/><rect x="8.9" y="14.5" width="1.9" height="1.1" fill="#f4d020"/>
<path d="M11 10.6 H12.4 Q15.4 10.6 15.4 13.6 Q15.4 16.7 12.4 16.7 H11 Z" fill="#fafafa" stroke="#111" stroke-width="1.1"/>
</svg></div>
<div class="a t11 " style="left:89px;top:552px;letter-spacing:-0.314px">ProcessResponse</div>
<div class="a t11" style="left:310px;top:551px;letter-spacing:0px">JCA Adapter</div>
<div class="a" style="left:454px;top:547px"><svg width="20" height="18" viewBox="0 0 20 18">
<path d="M7 8.5 H10 M12 4.5 H14 M11 7.5 H18" stroke="#222" stroke-width="1"/>
<rect x="9.2" y="1" width="2.6" height="7" fill="#222"/><rect x="10.1" y="1" width="0.9" height="7" fill="#f6d21e"/>
<rect x="3.2" y="5.2" width="3.8" height="5.8" rx="1" fill="#1f78e8" stroke="#0848b8" stroke-width="0.8"/>
<rect x="4.3" y="6.2" width="1" height="2.5" fill="#cfe4ff"/>
<rect x="14.2" y="1.2" width="3.8" height="5.8" rx="1" fill="#1f78e8" stroke="#0848b8" stroke-width="0.8"/>
<rect x="15.3" y="2.2" width="1" height="2.5" fill="#cfe4ff"/>
<path d="M11 8 H17.6 V14.5 L15 12 L11.6 15.6 L8.6 13.3 L12.4 10 L10.6 8.2 Z" fill="#fff" stroke="#2a2a2a" stroke-width="1"/>
</svg></div>
<div class="a t11" style="left:475px;top:552px">Reference</div>
<div class="a" style="left:594px;top:546px"><svg width="20" height="18" viewBox="0 0 20 18">
<path d="M4.9 10.3 L7.2 8 L9.5 10.3 L14.5 5 L16.9 7.4 L9.5 14.9 Z" fill="#1edc1e" stroke="#0a6a0a" stroke-width="1"/>
<path d="M6.5 10 L9.5 12.8 M10.8 10.8 L15 6.6" stroke="#b4ffb4" stroke-width="0.7" stroke-dasharray="0.9 0.9"/>
</svg></div>
<div class="a t11" style="left:618px;top:551px">Completed</div>
<div class="a t11" style="left:701px;top:551px;width:144px;text-align:right">Aug 23, 2010 7:28:54 AM</div>
<div class="a t11" style="left:854px;top:551px;letter-spacing:-0.1px">MessageEventOnUserTask of 20</div>
<div class="a" style="left:16px;top:566px;width:1096px;height:19px;background:#fff;border-bottom:1px solid #dcdcdc"></div>
<div class="a" style="left:301px;top:566px;width:1px;height:18px;background:#dcdcdc"></div>
<div class="a" style="left:447px;top:566px;width:1px;height:18px;background:#dcdcdc"></div>
<div class="a" style="left:593px;top:566px;width:1px;height:18px;background:#dcdcdc"></div>
<div class="a" style="left:699px;top:566px;width:1px;height:18px;background:#dcdcdc"></div>
<div class="a" style="left:845px;top:566px;width:1px;height:18px;background:#dcdcdc"></div>
<div class="a" style="left:69px;top:565px"><svg width="20" height="20" viewBox="0 0 20 20">
<path d="M14.3 5.6 Q18.2 5 17.7 8.6 Q17.2 11.4 14 11.2" fill="none" stroke="#6a6a6a" stroke-width="1.3"/>
<path d="M2 5 Q2 2.4 8.5 2.4 Q15 2.4 15 5 Q15 12 12 14.5 Q10.5 15.8 8.5 15.8 Q6.5 15.8 5 14.5 Q2 12 2 5 Z" fill="#f4f4f8" stroke="#626262" stroke-width="1.3"/>
<ellipse cx="8.5" cy="6.6" rx="4.7" ry="1.8" fill="#3c0604"/>
<path d="M9 1.6 L7 5.2 L8.8 5.2 L8 7.8 L10.6 4.2 L8.9 4.2 L10.2 1.6 Z" fill="#f8cc22"/>
<path d="M15 12.6 H16.4 Q17.6 12.6 17.6 14 V17.6 H15.2 Z" fill="#dcdcdc" stroke="#111" stroke-width="1.1"/>
<rect x="8.3" y="11" width="3" height="5.6" fill="#111"/>
<rect x="8.9" y="11.8" width="1.9" height="1.1" fill="#f4d020"/><rect x="8.9" y="14.5" width="1.9" height="1.1" fill="#f4d020"/>
<path d="M11 10.6 H12.4 Q15.4 10.6 15.4 13.6 Q15.4 16.7 12.4 16.7 H11 Z" fill="#fafafa" stroke="#111" stroke-width="1.1"/>
</svg></div>
<div class="a t11 " style="left:89px;top:571px;letter-spacing:-0.100px">IntMsgResponse</div>
<div class="a t11" style="left:310px;top:570px;letter-spacing:0px">JCA Adapter</div>
<div class="a" style="left:454px;top:566px"><svg width="20" height="18" viewBox="0 0 20 18">
<path d="M7 8.5 H10 M12 4.5 H14 M11 7.5 H18" stroke="#222" stroke-width="1"/>
<rect x="9.2" y="1" width="2.6" height="7" fill="#222"/><rect x="10.1" y="1" width="0.9" height="7" fill="#f6d21e"/>
<rect x="3.2" y="5.2" width="3.8" height="5.8" rx="1" fill="#1f78e8" stroke="#0848b8" stroke-width="0.8"/>
<rect x="4.3" y="6.2" width="1" height="2.5" fill="#cfe4ff"/>
<rect x="14.2" y="1.2" width="3.8" height="5.8" rx="1" fill="#1f78e8" stroke="#0848b8" stroke-width="0.8"/>
<rect x="15.3" y="2.2" width="1" height="2.5" fill="#cfe4ff"/>
<path d="M11 8 H17.6 V14.5 L15 12 L11.6 15.6 L8.6 13.3 L12.4 10 L10.6 8.2 Z" fill="#fff" stroke="#2a2a2a" stroke-width="1"/>
</svg></div>
<div class="a t11" style="left:475px;top:571px">Reference</div>
<div class="a" style="left:594px;top:565px"><svg width="20" height="18" viewBox="0 0 20 18">
<path d="M4.9 10.3 L7.2 8 L9.5 10.3 L14.5 5 L16.9 7.4 L9.5 14.9 Z" fill="#1edc1e" stroke="#0a6a0a" stroke-width="1"/>
<path d="M6.5 10 L9.5 12.8 M10.8 10.8 L15 6.6" stroke="#b4ffb4" stroke-width="0.7" stroke-dasharray="0.9 0.9"/>
</svg></div>
<div class="a t11" style="left:618px;top:570px">Completed</div>
<div class="a t11" style="left:701px;top:570px;width:144px;text-align:right">Aug 23, 2010 7:28:54 AM</div>
<div class="a t11" style="left:854px;top:570px;letter-spacing:-0.1px">MessageEventOnUserTask of 20</div>
<div class="a" style="left:16px;top:585px;width:1096px;height:19px;background:#f6f6f6;border-bottom:1px solid #dcdcdc"></div>
<div class="a" style="left:301px;top:585px;width:1px;height:18px;background:#dcdcdc"></div>
<div class="a" style="left:447px;top:585px;width:1px;height:18px;background:#dcdcdc"></div>
<div class="a" style="left:593px;top:585px;width:1px;height:18px;background:#dcdcdc"></div>
<div class="a" style="left:699px;top:585px;width:1px;height:18px;background:#dcdcdc"></div>
<div class="a" style="left:845px;top:585px;width:1px;height:18px;background:#dcdcdc"></div>
<div class="a" style="left:69px;top:584px"><svg width="20" height="20" viewBox="0 0 20 20">
<path d="M14.3 5.6 Q18.2 5 17.7 8.6 Q17.2 11.4 14 11.2" fill="none" stroke="#6a6a6a" stroke-width="1.3"/>
<path d="M2 5 Q2 2.4 8.5 2.4 Q15 2.4 15 5 Q15 12 12 14.5 Q10.5 15.8 8.5 15.8 Q6.5 15.8 5 14.5 Q2 12 2 5 Z" fill="#f4f4f8" stroke="#626262" stroke-width="1.3"/>
<ellipse cx="8.5" cy="6.6" rx="4.7" ry="1.8" fill="#3c0604"/>
<path d="M9 1.6 L7 5.2 L8.8 5.2 L8 7.8 L10.6 4.2 L8.9 4.2 L10.2 1.6 Z" fill="#f8cc22"/>
<path d="M15 12.6 H16.4 Q17.6 12.6 17.6 14 V17.6 H15.2 Z" fill="#dcdcdc" stroke="#111" stroke-width="1.1"/>
<rect x="8.3" y="11" width="3" height="5.6" fill="#111"/>
<rect x="8.9" y="11.8" width="1.9" height="1.1" fill="#f4d020"/><rect x="8.9" y="14.5" width="1.9" height="1.1" fill="#f4d020"/>
<path d="M11 10.6 H12.4 Q15.4 10.6 15.4 13.6 Q15.4 16.7 12.4 16.7 H11 Z" fill="#fafafa" stroke="#111" stroke-width="1.1"/>
</svg></div>
<div class="a t11 " style="left:89px;top:590px;letter-spacing:-0.083px">InclusiveGatewayWithServiceTask</div>
<div class="a t11" style="left:310px;top:589px;letter-spacing:0px">JCA Adapter</div>
<div class="a" style="left:454px;top:585px"><svg width="20" height="18" viewBox="0 0 20 18">
<path d="M7 8.5 H10 M12 4.5 H14 M11 7.5 H18" stroke="#222" stroke-width="1"/>
<rect x="9.2" y="1" width="2.6" height="7" fill="#222"/><rect x="10.1" y="1" width="0.9" height="7" fill="#f6d21e"/>
<rect x="3.2" y="5.2" width="3.8" height="5.8" rx="1" fill="#1f78e8" stroke="#0848b8" stroke-width="0.8"/>
<rect x="4.3" y="6.2" width="1" height="2.5" fill="#cfe4ff"/>
<rect x="14.2" y="1.2" width="3.8" height="5.8" rx="1" fill="#1f78e8" stroke="#0848b8" stroke-width="0.8"/>
<rect x="15.3" y="2.2" width="1" height="2.5" fill="#cfe4ff"/>
<path d="M11 8 H17.6 V14.5 L15 12 L11.6 15.6 L8.6 13.3 L12.4 10 L10.6 8.2 Z" fill="#fff" stroke="#2a2a2a" stroke-width="1"/>
</svg></div>
<div class="a t11" style="left:475px;top:590px">Reference</div>
<div class="a" style="left:594px;top:584px"><svg width="20" height="18" viewBox="0 0 20 18">
<path d="M4.9 10.3 L7.2 8 L9.5 10.3 L14.5 5 L16.9 7.4 L9.5 14.9 Z" fill="#1edc1e" stroke="#0a6a0a" stroke-width="1"/>
<path d="M6.5 10 L9.5 12.8 M10.8 10.8 L15 6.6" stroke="#b4ffb4" stroke-width="0.7" stroke-dasharray="0.9 0.9"/>
</svg></div>
<div class="a t11" style="left:618px;top:589px">Completed</div>
<div class="a t11" style="left:701px;top:589px;width:144px;text-align:right">Aug 23, 2010 7:28:54 AM</div>
<div class="a t11" style="left:854px;top:589px;letter-spacing:-0.1px">MessageEventOnUserTask of 20</div>
</body></html>
